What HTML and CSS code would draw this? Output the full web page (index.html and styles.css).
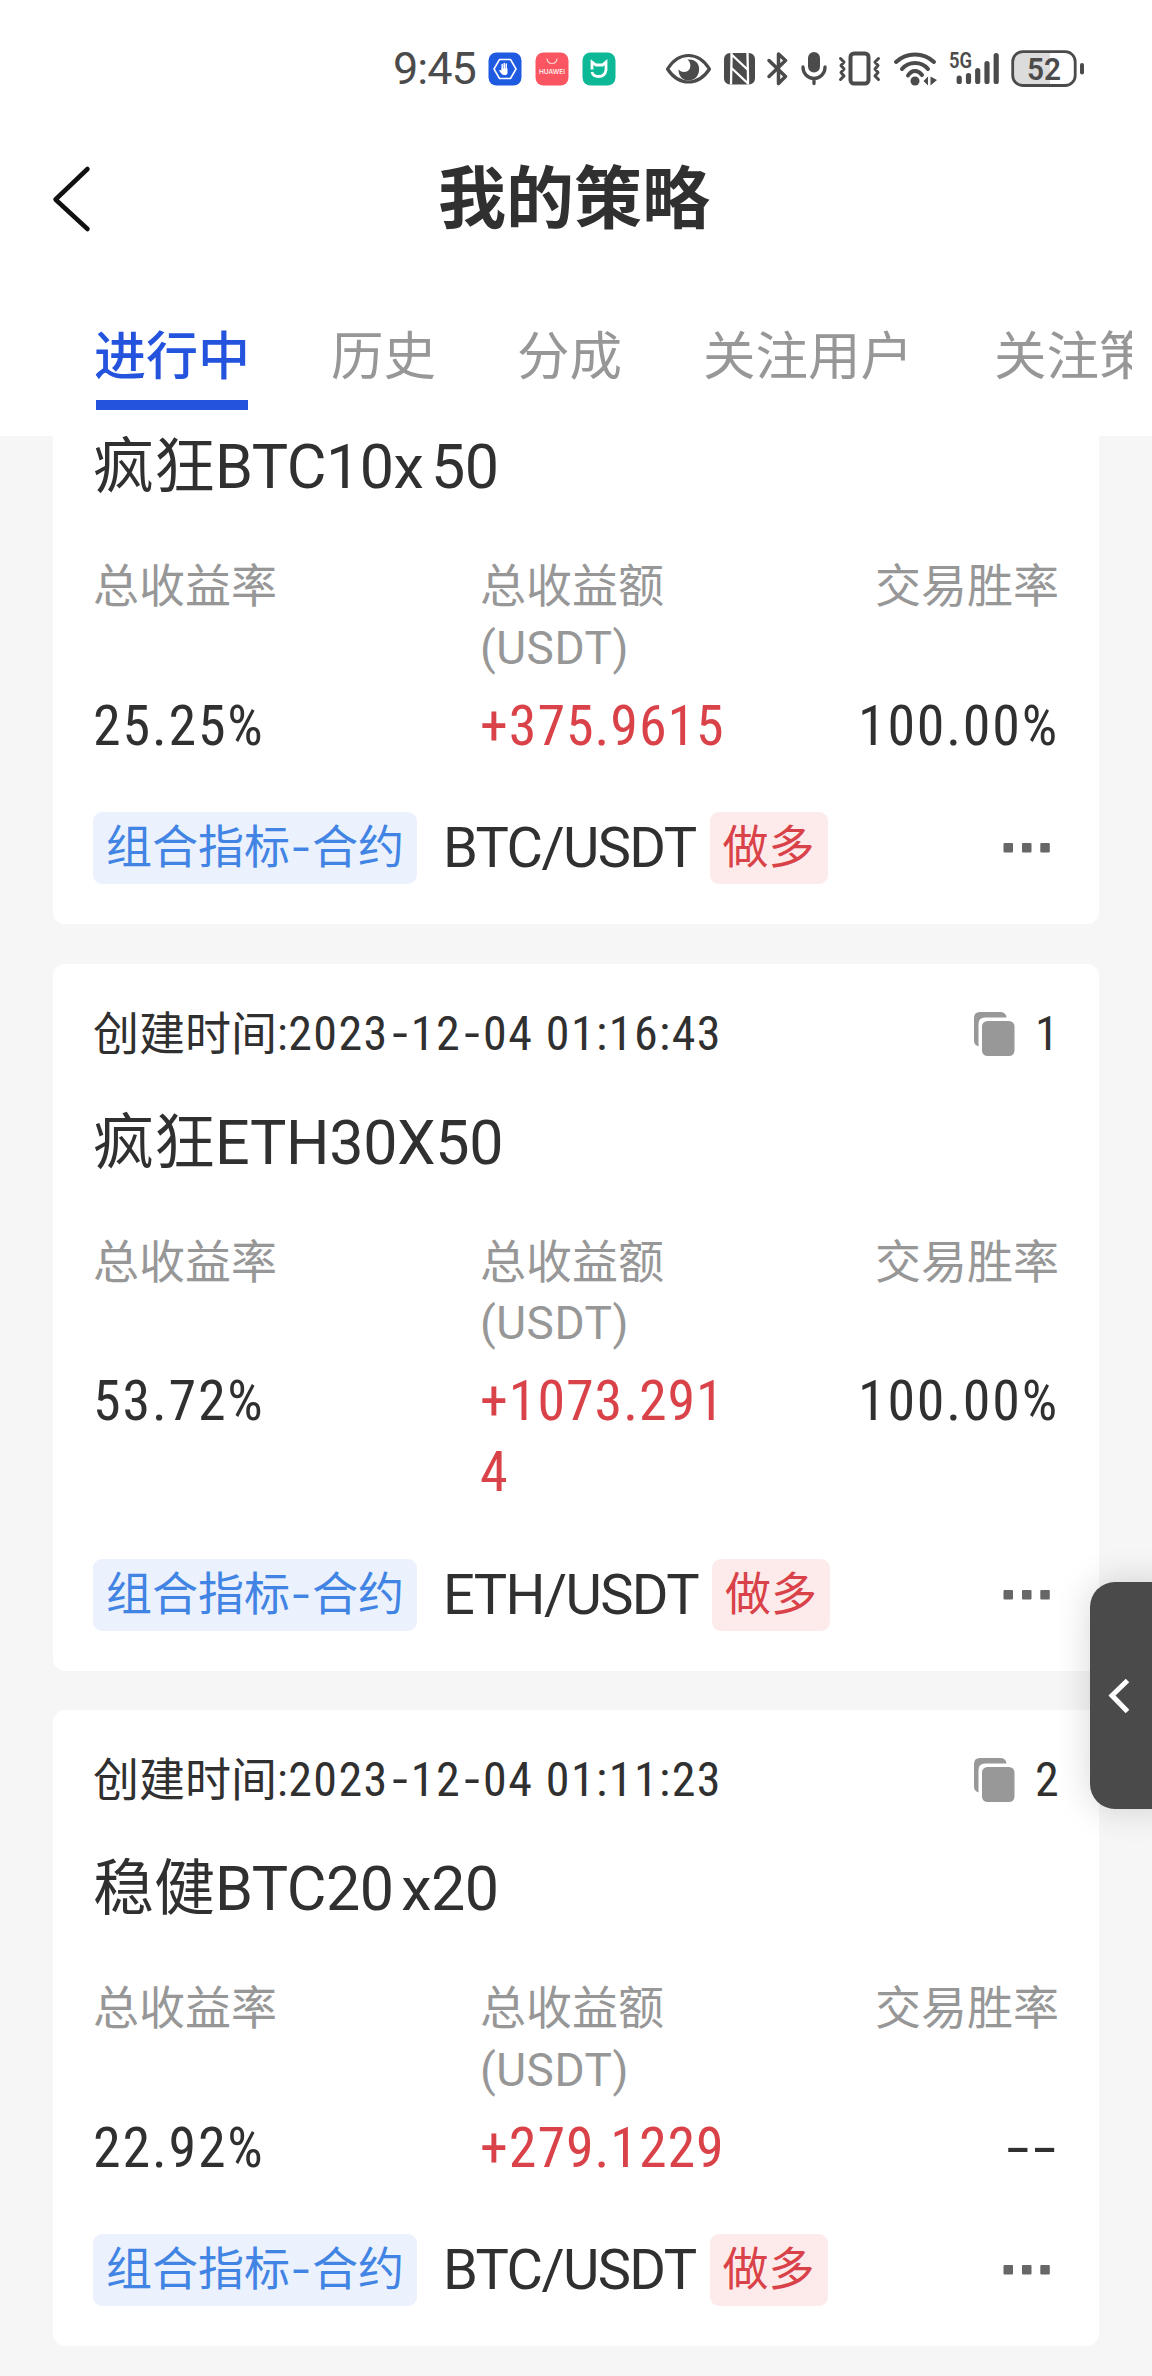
FILE: index.html
```html
<!DOCTYPE html>
<html lang="zh-CN">
<head>
<meta charset="utf-8">
<title>我的策略</title>
<link rel="stylesheet" href="styles.css">
</head>
<body>
<svg class="sprite" aria-hidden="true">
  <symbol id="copy" viewBox="0 0 42 46">
    <path d="M7 1H27Q33 1 33.500 6.500H12Q5.500 6.500 5.500 13V35.500Q1 34 1 29.500V7Q1 1 7 1Z"/>
    <rect x="9" y="10" width="32.500" height="35" rx="5.500"/>
  </symbol>
  <symbol id="more" viewBox="0 0 48 12">
    <rect x="0.500" y="1" width="9.500" height="9.500" rx="1"/>
    <rect x="19" y="1" width="9.500" height="9.500" rx="1"/>
    <rect x="37.300" y="1" width="9.500" height="9.500" rx="1"/>
  </symbol>
</svg>
<div class="screen">
  <header class="header">
    <div class="status">
      <span class="clock">9:45</span>
      <div class="apps">
        <svg class="app" viewBox="0 0 34 34">
          <rect x="0.500" y="0.500" width="33" height="33" rx="8" fill="#1f5be0"/>
          <path d="M11.500 7.500H22.500L28 17L22.500 26.500H11.500L6 17Z" fill="none" stroke="#fff" stroke-width="1.500" stroke-linejoin="round"/>
          <path d="M14.200 12.500V18M16.200 11.500V18M18.200 12V18" stroke="#fff" stroke-width="1.500" stroke-linecap="round"/>
          <path d="M13.500 16.500H19.500V21Q19.500 23 17.500 23H16Q14.500 23 13.300 21.500L11 18.500Q12 17.300 13.500 18.700Z" fill="#fff"/>
        </svg>
        <svg class="app" viewBox="0 0 34 34">
          <rect x="0.500" y="0.500" width="33" height="33" rx="8" fill="#fa5560"/>
          <path d="M12 6.500Q12.500 11.500 17 11.500T22 6.500" fill="none" stroke="#ffd5d5" stroke-width="1.200"/>
          <text x="17" y="21.500" class="app-name" textLength="26">HUAWEI</text>
        </svg>
        <svg class="app" viewBox="0 0 34 34">
          <rect x="0.500" y="0.500" width="33" height="33" rx="8" fill="#0db896"/>
          <path d="M10 17.500V10L14 13H20.500L24 10V18Q23 24.500 16.500 24.500Q11 24.500 10 20" fill="none" stroke="#fff" stroke-width="2.800"/>
        </svg>
      </div>
      <div class="signals">
        <svg class="sig" width="48" viewBox="0 0 48 40">
          <path d="M3.500 20Q12 6.500 24.500 6.500T45.500 20Q37 33 24.500 33T3.500 20Z" fill="none" stroke="#4b4b4b" stroke-width="3.200" stroke-linejoin="round"/>
          <path d="M23.500 10.500C32 10 36 15 35 22C34 28 30 31.500 24.500 31.500C18.500 31.500 14.500 27 14.500 20.500C18 24.500 24.500 23.500 26 19C27 15.500 26 12.500 23.500 10.500Z"/>
        </svg>
        <svg class="sig" width="34" viewBox="0 0 34 40">
          <rect x="1" y="4" width="31" height="31.500" rx="6"/>
          <path d="M8.500 4V10L8 35.500M25 35.500V29L24.500 4M8.500 5.500L25 21M8.500 19L25 34.500" fill="none" stroke="#fff" stroke-width="2.300"/>
        </svg>
        <svg class="sig" width="24" viewBox="0 0 24 40">
          <path d="M3 11.500L19.500 27.500L12.500 34.500V5L19.500 11.500L3 27.500" fill="none" stroke="#4b4b4b" stroke-width="3.500" stroke-linecap="round" stroke-linejoin="round"/>
        </svg>
        <svg class="sig" width="28" viewBox="0 0 28 40">
          <rect x="8" y="3" width="12" height="20.500" rx="6"/>
          <path d="M3 18V18.500A11 11 0 0 0 25 18.500V18M14 29.500V34.500" fill="none" stroke="#4b4b4b" stroke-width="3.300" stroke-linecap="round"/>
        </svg>
        <svg class="sig" width="44" viewBox="0 0 44 40">
          <rect x="12.500" y="4.500" width="18" height="30" rx="3.500" fill="none" stroke="#4b4b4b" stroke-width="4"/>
          <path d="M2.500 9.500L6 13L3 16.500L6 20L3 23.500L6 27L2.500 30.500M40.500 9.500L37 13L40 16.500L37 20L40 23.500L37 27L40.500 30.500" fill="none" stroke="#4b4b4b" stroke-width="3" stroke-linecap="round" stroke-linejoin="round"/>
        </svg>
        <svg class="sig" width="48" viewBox="0 0 48 40">
          <path d="M4 13Q12 5.500 23 5.500T42 13M10 20Q15 14 23 14T36 20M16 26.500Q19 22 23 22T30 26" fill="none" stroke="#4b4b4b" stroke-width="4" stroke-linecap="round"/>
          <circle cx="23" cy="32" r="4.500"/>
          <path d="M31.500 32L36 27.500V36.500ZM38.500 27.500V36.500L45 31Z"/>
        </svg>
        <svg class="sig" width="54" viewBox="0 0 54 40">
          <text x="1" y="19" class="net" textLength="23" lengthAdjust="spacingAndGlyphs">5G</text>
          <path d="M11.200 30.500V34M20.500 28V34M29.700 23V34M39 16V34M48.200 8V34" transform="translate(0 -1.500)" fill="none" stroke="#4b4b4b" stroke-width="5.200" stroke-linecap="round"/>
        </svg>
        <svg class="sig" width="76" viewBox="0 0 76 40">
          <path d="M11 3.500H40V36H11Q3 36 3 28V11.500Q3 3.500 11 3.500Z" fill="#dcdcdc"/>
          <rect x="2.700" y="2.700" width="62.500" height="33.800" rx="10" fill="none" stroke="#4b4b4b" stroke-width="2.800"/>
          <rect x="70" y="14" width="4" height="11.500" rx="2"/>
          <text x="34" y="30.800" class="level" textLength="34" lengthAdjust="spacingAndGlyphs">52</text>
        </svg>
      </div>
    </div>
    <div class="titlebar">
      <svg class="back" viewBox="0 0 40 68"><path d="M36.500 4L4.500 34.500L36.500 64" /></svg>
      <h1 class="title">我的策略</h1>
    </div>
    <nav class="tabs">
      <a class="tab tab--active">进行中</a>
      <a class="tab">历史</a>
      <a class="tab">分成</a>
      <a class="tab">关注用户</a>
      <a class="tab">关注策略</a>
    </nav>
  </header>
  <main class="list">
    <article class="card card--scrolled">
      <h2 class="name">疯狂<span class="name-btc">BTC10x 50</span></h2>
      <div class="stats">
        <div class="stat"><div class="label">总收益率</div><div class="value">25.25%</div></div>
        <div class="stat"><div class="label">总收益额<br><span class="unit">(USDT)</span></div><div class="value value--gain">+375.9615</div></div>
        <div class="stat stat--end"><div class="label">交易胜率</div><div class="value">100.00%</div></div>
      </div>
      <div class="foot"><span class="tag">组合指标<span class="dash">-</span>合约</span><span class="pair">BTC/USDT</span><span class="tag tag--long">做多</span><svg class="more"><use href="#more"/></svg></div>
    </article>
    <article class="card">
      <div class="meta"><span>创建时间:<span class="date">2023<span class="dash">-</span>12<span class="dash">-</span>04 01:16:43</span></span><span class="copies"><svg class="copy"><use href="#copy"/></svg><span class="count">1</span></span></div>
      <h2 class="name">疯狂<span class="name-eth">ETH30X50</span></h2>
      <div class="stats">
        <div class="stat"><div class="label">总收益率</div><div class="value">53.72%</div></div>
        <div class="stat"><div class="label">总收益额<br><span class="unit">(USDT)</span></div><div class="value value--gain">+1073.2914</div></div>
        <div class="stat stat--end"><div class="label">交易胜率</div><div class="value">100.00%</div></div>
      </div>
      <div class="foot"><span class="tag">组合指标<span class="dash">-</span>合约</span><span class="pair">ETH/USDT</span><span class="tag tag--long">做多</span><svg class="more"><use href="#more"/></svg></div>
    </article>
    <article class="card">
      <div class="meta"><span>创建时间:<span class="date">2023<span class="dash">-</span>12<span class="dash">-</span>04 01:11:23</span></span><span class="copies"><svg class="copy"><use href="#copy"/></svg><span class="count">2</span></span></div>
      <h2 class="name">稳健<span class="name-btc">BTC20 x20</span></h2>
      <div class="stats">
        <div class="stat"><div class="label">总收益率</div><div class="value">22.92%</div></div>
        <div class="stat"><div class="label">总收益额<br><span class="unit">(USDT)</span></div><div class="value value--gain">+279.1229</div></div>
        <div class="stat stat--end"><div class="label">交易胜率</div><div class="value"><span class="empty">--</span></div></div>
      </div>
      <div class="foot"><span class="tag">组合指标<span class="dash">-</span>合约</span><span class="pair">BTC/USDT</span><span class="tag tag--long">做多</span><svg class="more"><use href="#more"/></svg></div>
    </article>
  </main>
  <button class="drawer" aria-label="展开"><svg viewBox="0 0 22 36"><path d="M19.500 2.500L4 17.500L19.500 33.500"/></svg></button>
</div>
</body>
</html>
```
FILE: styles.css
```css
* { box-sizing: border-box; }
body {
  margin: 0;
  background: #f6f6f6;
  color: #303030;
  font-family: Roboto, "Noto Sans CJK SC", sans-serif;
}
.sprite { position: absolute; width: 0; height: 0; }
.screen {
  position: relative;
  width: 1152px;
  height: 2376px;
  overflow: hidden;
}
.header { height: 436px; background: #fff; }

.status {
  display: flex;
  align-items: center;
  height: 137px;
  padding-left: 393px;
  fill: #4b4b4b;
}
.clock {
  width: 95px;
  color: #4b4b4b;
  font-size: 45px;
  line-height: 50px;
  letter-spacing: -1px;
}
.apps { display: flex; gap: 13px; }
.app { width: 34px; height: 34px; }
.app-name { font: 500 6.500px Inter, sans-serif; fill: #fff; text-anchor: middle; }
.signals { display: flex; margin-left: 48px; }
.sig { display: block; flex: none; height: 40px; }
.sig:nth-child(2) { margin-left: 11px; }
.sig:nth-child(3) { margin-left: 9px; }
.sig:nth-child(4) { margin-left: 10px; }
.sig:nth-child(5) { margin-left: 10px; }
.sig:nth-child(6) { margin-left: 10px; }
.sig:nth-child(7) { margin-left: 8px; }
.sig:nth-child(8) { margin-left: 8px; }
.net { font: 600 22px Roboto, sans-serif; }
.level { font: 600 31px Roboto, sans-serif; text-anchor: middle; }

.titlebar {
  display: grid;
  grid-template-columns: 100px 1fr 100px;
  align-items: center;
  height: 125px;
  padding: 0 4px 0 0;
}
.back {
  width: 40px;
  height: 68px;
  margin-left: 51px;
  margin-top: -2px;
  fill: none;
  stroke: #111;
  stroke-width: 4.500;
  stroke-linecap: round;
  stroke-linejoin: round;
}
.title {
  margin: 0;
  text-align: center;
  font-size: 68px;
  font-weight: 700;
  line-height: 100px;
}
.tabs {
  display: flex;
  gap: 81px;
  width: 1132px;
  height: 148px;
  padding: 58px 0 0 94px;
  overflow: hidden;
}
.tab {
  flex: none;
  height: 90px;
  color: #979797;
  font-size: 52.500px;
  line-height: 75px;
}
.tab--active {
  color: #2453de;
  font-size: 52px;
  font-weight: 500;
  background: linear-gradient(#2453de, #2453de) 2px 80px / 152px 10px no-repeat;
}

.list {
  display: flex;
  flex-direction: column;
  gap: 39.500px;
  height: 1940px;
  padding: 0 53px;
  overflow: hidden;
}
.card {
  flex: none;
  padding: 36px 40px 40px;
  border-radius: 12px;
  background: #fff;
}
.card--scrolled {
  padding-top: 0;
  border-radius: 0 0 12px 12px;
}
.meta {
  display: flex;
  justify-content: space-between;
  height: 62px;
  font-size: 46px;
  line-height: 67px;
}
.date, .count { font-size: 48px; font-stretch: 75%; }
.date { letter-spacing: 1.450px; }
.dash {
  display: inline-block;
  width: 22px;
  letter-spacing: 0;
  text-align: center;
  transform: scaleX(1.350);
}
.copies { display: flex; }
.copy { width: 42px; height: 46px; margin: 11px 20px 0 0; fill: #989898; }
.count { width: 24px; }
.name {
  height: 84px;
  margin: 38px 0 0;
  font-size: 61px;
  font-weight: 400;
  line-height: 87px;
}
.name-btc { letter-spacing: -0.500px; word-spacing: -7px; }
.name-eth { letter-spacing: -0.300px; }
.card--scrolled .name { margin-top: -12px; }
.stats {
  display: grid;
  grid-template-columns: 387px 250px 1fr;
  margin-top: 48px;
}
.label {
  height: 132px;
  color: #979797;
  font-size: 46px;
  line-height: 61.500px;
}
.unit { letter-spacing: 0.500px; }
.stat--end { text-align: right; }
.value {
  position: relative;
  top: 2.500px;
  font-size: 56px;
  line-height: 71px;
  letter-spacing: 1.800px;
  overflow-wrap: anywhere;
  font-stretch: 75%;
}
.value--gain { letter-spacing: 0.950px; color: #d94248; }
.empty {
  display: inline-block;
  transform: scaleX(1.700);
  transform-origin: right;
}
.foot {
  display: flex;
  align-items: center;
  height: 72px;
  margin-top: 53px;
}
.tag {
  height: 72px;
  padding: 0 13px;
  border-radius: 9px;
  background: #ebf2fd;
  color: #4284e4;
  font-size: 46px;
  line-height: 71px;
}
.tag--long { margin-left: 14px; background: #fdebeb; color: #d94248; }
.pair { margin-left: 26px; font-size: 56px; line-height: 76px; letter-spacing: -1.600px; }
.more { width: 48px; height: 12px; margin-left: auto; margin-right: 8px; fill: #676767; }

.drawer {
  position: absolute;
  top: 1582px;
  right: -30px;
  width: 92px;
  height: 227px;
  padding: 0 0 0 18px;
  border: 0;
  border-radius: 25px;
  background: #4a4a4a;
  box-shadow: 0 0 36px rgba(0, 0, 0, 0.160);
}
.drawer svg {
  display: block;
  width: 22px;
  height: 36px;
  fill: none;
  stroke: #fff;
  stroke-width: 5;
}
```
